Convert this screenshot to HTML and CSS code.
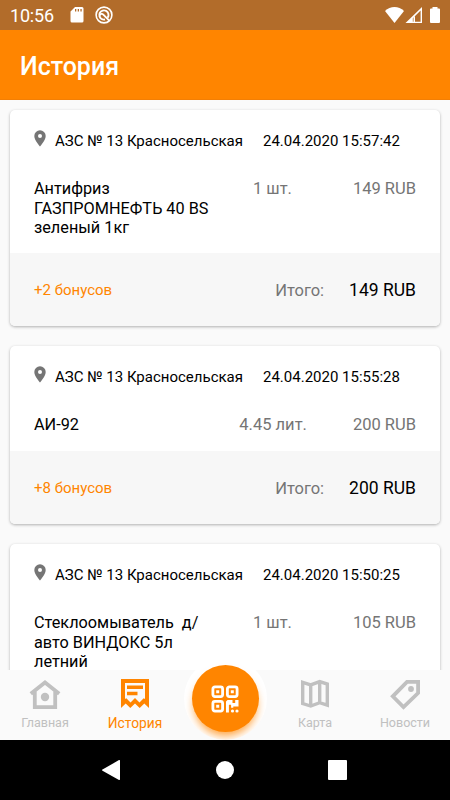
FILE: index.html
```html
<!DOCTYPE html>
<html lang="ru">
<head>
<meta charset="utf-8">
<title>История</title>
<link rel="stylesheet" href="styles.css">
</head>
<body>
<div class="phone">
  <header class="status">
    <span class="clock">10:56</span>
    <svg class="sd" width="14" height="17" viewBox="0 0 14 17"><path fill="#fff" fill-rule="evenodd" d="M5 1h7A1.500 1.500 0 0 1 13.500 2.500V15A1.500 1.500 0 0 1 12 16.500H2A1.500 1.500 0 0 1 .5 15V5.500zM5 3v2.500h1.300V3zM7.700 3v2.500H9V3zM10.400 3v2.500h1.300V3z"/></svg>
    <svg class="q" width="18" height="18" viewBox="0 0 18 18" fill="none" stroke="#fff"><circle cx="9" cy="9" r="7.900" stroke-width="1.600"/><path stroke-width="1.900" d="M10 13.500A4.600 4.600 0 1 1 13.300 7.500Q14 9.800 12.700 11.600M4.600 9.500Q6.500 6.800 8.300 8.600L14.500 14.800"/></svg>
    <svg class="signals" width="56" height="18" viewBox="0 0 56 18"><path fill="#fff" d="M0 5C5.200-.5 13.800-.5 19 5L9.500 17z"/><path fill="#fff" fill-rule="evenodd" d="M20.500 17L37 1v16zM30 10.300v5.400h5.600V4.600L27.800 12.200V15.700h.7V11.700z"/><path fill="#fff" d="M47.500 1h5v1.500h1.500q1 0 1 1V16q0 1-1 1h-8q-1 0-1-1V3.500q0-1 1-1h1.500z"/></svg>
  </header>
  <div class="toolbar"><h1>История</h1></div>
  <main class="list">
    <article class="card">
      <div class="place"><svg class="pin" width="12" height="17" viewBox="0 0 12 17"><path fill="#757575" fill-rule="evenodd" d="M6 .3a5.700 5.700 0 0 1 5.700 5.700C11.700 10.200 6 16.500 6 16.500S.3 10.200.3 6A5.700 5.700 0 0 1 6 .3zM6 4a2 2 0 1 0 0 4a2 2 0 0 0 0-4z"/></svg><span class="station">АЗС № 13 Красносельская</span><time>24.04.2020 15:57:42</time></div>
      <div class="item three-lines"><p>Антифриз<br>ГАЗПРОМНЕФТЬ 40 BS<br>зеленый 1кг</p><span class="qty">1 шт.</span><span class="price">149 RUB</span></div>
      <div class="total"><span class="bonus">+2 бонусов</span><span class="label">Итого:</span><strong>149 RUB</strong></div>
    </article>
    <article class="card">
      <div class="place"><svg class="pin" width="12" height="17" viewBox="0 0 12 17"><path fill="#757575" fill-rule="evenodd" d="M6 .3a5.700 5.700 0 0 1 5.700 5.700C11.700 10.200 6 16.500 6 16.500S.3 10.200.3 6A5.700 5.700 0 0 1 6 .3zM6 4a2 2 0 1 0 0 4a2 2 0 0 0 0-4z"/></svg><span class="station">АЗС № 13 Красносельская</span><time>24.04.2020 15:55:28</time></div>
      <div class="item one-line"><p>АИ-92</p><span class="qty wide">4.45 лит.</span><span class="price">200 RUB</span></div>
      <div class="total"><span class="bonus">+8 бонусов</span><span class="label">Итого:</span><strong>200 RUB</strong></div>
    </article>
    <article class="card">
      <div class="place"><svg class="pin" width="12" height="17" viewBox="0 0 12 17"><path fill="#757575" fill-rule="evenodd" d="M6 .3a5.700 5.700 0 0 1 5.700 5.700C11.700 10.200 6 16.500 6 16.500S.3 10.200.3 6A5.700 5.700 0 0 1 6 .3zM6 4a2 2 0 1 0 0 4a2 2 0 0 0 0-4z"/></svg><span class="station">АЗС № 13 Красносельская</span><time>24.04.2020 15:50:25</time></div>
      <div class="item three-lines"><p>Стеклоомыватель&nbsp; д/<br>авто ВИНДОКС 5л<br>летний</p><span class="qty">1 шт.</span><span class="price">105 RUB</span></div>
    </article>
  </main>
  <nav class="tabs">
    <a class="tab"><svg width="32" height="32" viewBox="0 0 32 32"><path fill="none" stroke="#c0c0c0" stroke-width="3.800" d="M1.800 15.700L16 4.400l14.200 11.300M5.800 13v16.100h20.400V13"/><circle cx="16" cy="19" r="4.200" fill="#c0c0c0"/></svg><span>Главная</span></a>
    <a class="tab active"><svg width="32" height="32" viewBox="0 0 32 32"><path fill="#ff8500" fill-rule="evenodd" d="M2 1h28v29l-4.700-4.500L20.700 30 16 25.500 11.300 30l-4.600-4.500L2 30zM6 5v16l1.300-.8 4.200 4.300 4.500-4.500 4.500 4.500 4.200-4.300L26 21V5z"/><path fill="none" stroke="#ff8500" stroke-width="3.500" d="M8 9.300h16M8 15.500h10.500"/></svg><span>История</span></a>
    <div class="tab center"><div class="halo"><button class="fab" aria-label="QR"><svg width="28" height="28" viewBox="0 0 28 28" fill="none" stroke="#fff"><g stroke-width="2.800"><rect x="1.900" y="1.900" width="9.700" height="9.700" rx="2"/><rect x="16.400" y="1.900" width="9.700" height="9.700" rx="2"/><rect x="1.900" y="16.400" width="9.700" height="9.700" rx="2"/></g><g fill="#fff" stroke="none"><path d="M5.200 5.200h3v3h-3zM19.800 5.200h3v3h-3zM5.200 19.800h3v3h-3zM16.500 15h5v3h2.700V15H27.500v6.500h-5.200v1.200h-2.200v-3h-2.200V27.500H15v-11z"/><circle cx="21.500" cy="26" r="1.600"/><circle cx="26" cy="26" r="1.600"/></g></svg></button></div></div>
    <a class="tab"><svg width="32" height="32" viewBox="0 0 32 32"><path fill="none" stroke="#c0c0c0" stroke-width="3.400" d="M3.700 4.400l8 2.500 9-3.300 7.600 2.500v21.100l-7.600-2.500-9 3.300-8-2.500zM11.700 6.500v21M20.700 4v21"/></svg><span>Карта</span></a>
    <a class="tab"><svg width="32" height="32" viewBox="0 0 32 32"><path fill="none" stroke="#c0c0c0" stroke-width="3.800" d="M18 3.900h11.100V15L14.500 29 3.800 18.300z"/><circle cx="22" cy="11" r="2.900" fill="#c0c0c0"/></svg><span>Новости</span></a>
  </nav>
  <footer class="system"><svg width="250" height="22" viewBox="0 0 250 22" fill="#fff"><path d="M2.500 10.500Q1.300 11 2.500 11.700L19 20.900q1 .4 1-.6V1.700q0-1-1-.6z"/><circle cx="125" cy="11" r="9"/><rect x="228" y="1" width="19" height="20" rx="1"/></svg></footer>
</div>
</body>
</html>
```
FILE: styles.css
```css
* { box-sizing: border-box; }
body { margin: 0; font-family: Roboto, "Noto Sans", sans-serif; color: #000; }
.phone { width: 450px; height: 800px; overflow: hidden; display: flex; flex-direction: column; background: #fafafa; }
.status { flex: none; height: 30px; background: #b26c2a; display: flex; align-items: flex-start; padding: 6px 9px 0 10px; }
.clock { color: #fff; font-size: 18px; line-height: 20px; width: 60px; letter-spacing: -.2px; }
.q { margin-left: 11px; }
.signals { margin-left: auto; }
.toolbar { flex: none; height: 70px; background: #ff8500; display: flex; align-items: center; padding: 4px 20px 0; border-bottom: 1px solid #f37f05; }
h1 { margin: 0; color: #fff; font-size: 25px; font-weight: 500; line-height: 30px; }
.list { height: 570px; flex: none; overflow: hidden; padding: 10px 10px 0; display: flex; flex-direction: column; gap: 20px; }
.card { flex: none; background: #fff; border-radius: 5px; overflow: hidden; box-shadow: 0 1px 3px rgba(0,0,0,.3); }
.place { height: 61px; padding: 20px 24px 0; display: flex; align-items: flex-start; font-size: 15px; line-height: 22px; }
.pin { margin-right: 9px; }
.station { width: 208px; white-space: nowrap; }
time { white-space: nowrap; }
.item { display: flex; padding: 8px 24px 0; font-size: 16.5px; line-height: 19.500px; color: #757575; }
.item p { margin: 0; flex: 1; color: #000; white-space: nowrap; font-size: 16.25px; }
.three-lines { height: 82px; }
.one-line { height: 44px; }
.qty, .price { white-space: nowrap; }
.qty { margin-right: 61px; }
.wide { margin-right: 46px; }
.total { height: 73px; background: #f7f7f7; padding: 1px 24px 0; display: flex; align-items: center; }
.bonus { font-size: 15px; color: #ff8500; flex: 1; }
.label { color: #757575; font-size: 16.5px; margin-right: 25px; }
strong { font-size: 17.500px; font-weight: 400; }
.tabs { flex: none; height: 70px; display: flex; background: #fafafa; position: relative; }
.tab { width: 90px; display: flex; flex-direction: column; align-items: center; padding-top: 8px; font-size: 12.500px; line-height: 18px; color: #c0c0c0; }
.tab span { margin-top: 4px; }
.active { color: #ff8500; font-size: 13.750px; }
.center { padding: 0; }
.halo { width: 83px; height: 83px; margin-top: -13px; flex: none; border-radius: 50%; background: #fff; overflow: hidden; display: flex; align-items: center; justify-content: center; }
.fab { width: 67px; height: 67px; padding: 0; border: 0; border-radius: 50%; background: #ff8500; box-shadow: 0 6px 9px -2px rgba(255,133,0,.75); display: flex; align-items: center; justify-content: center; }
.system { flex: none; height: 60px; background: #000; display: flex; align-items: center; justify-content: center; position: relative; }
```
